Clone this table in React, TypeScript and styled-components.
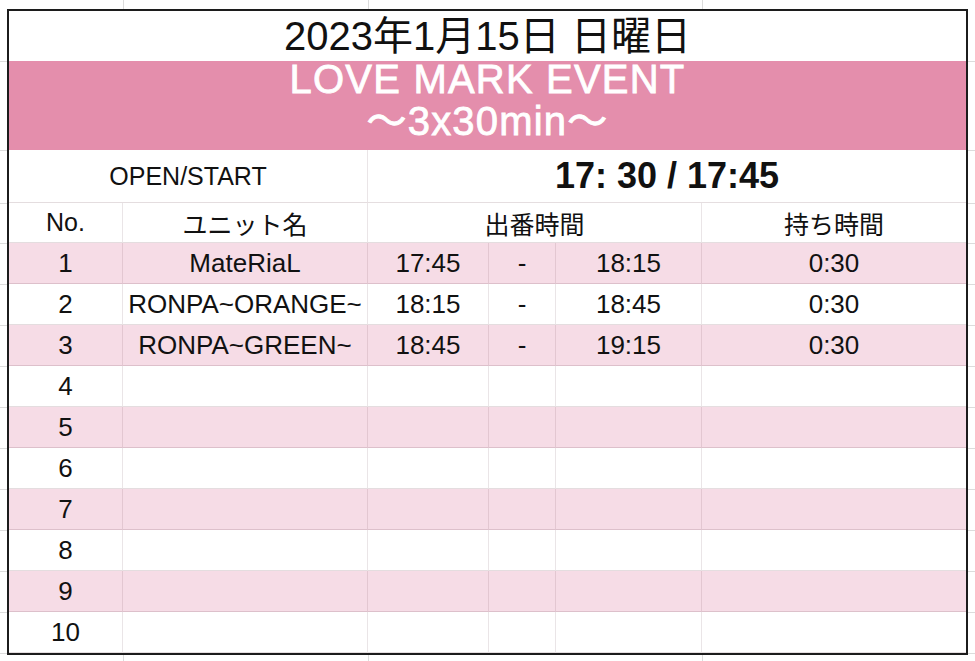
import styled, { createGlobalStyle } from "styled-components";

const GlobalStyle = createGlobalStyle`
  html, body {
    margin: 0;
    padding: 0;
    background-color: #fff;
  }
  body {
    font-family: "Liberation Sans", "Noto Sans CJK JP", sans-serif;
    color: #111;
    /* faint spreadsheet grid showing around the printed table */
    background-image:
      linear-gradient(#dcdcdc, #dcdcdc),
      linear-gradient(#dcdcdc, #dcdcdc),
      linear-gradient(#dcdcdc, #dcdcdc),
      linear-gradient(#dcdcdc, #dcdcdc),
      linear-gradient(#dcdcdc, #dcdcdc),
      linear-gradient(#dcdcdc, #dcdcdc),
      repeating-linear-gradient(
        to bottom,
        #dcdcdc 0 1px,
        transparent 1px 41px
      );
    background-repeat: no-repeat;
    background-size: 1px 100%, 1px 100%, 1px 100%, 100% 1px, 100% 1px,
      100% 1px, 100% 460px;
    background-position: 123px 0, 368px 0, 702px 0, 0 61px, 0 150px,
      0 203px, 0 243px;
    min-height: 661px;
  }
`;

const Page = styled.div`
  padding: 9px 7px 0 7px;
`;

const Sheet = styled.div`
  width: 957px;
  border: 2px solid #1c1c1c;
  background: #fff;
  display: grid;
  grid-template-columns: 114px 245px 121px 67px 146px 1fr;
  grid-template-rows: 50px 89px 53px 40px repeat(10, 41px);
`;

const Title = styled.div`
  grid-column: 1 / -1;
  display: flex;
  align-items: center;
  justify-content: center;
  font-size: 40px;
  color: #111;
  padding-bottom: 6px;
`;

const Banner = styled.div`
  grid-column: 1 / -1;
  background: #e48eac;
  color: #fff;
  display: flex;
  flex-direction: column;
  align-items: center;
  justify-content: center;
  font-size: 40px;
  letter-spacing: 1.2px;
  line-height: 42px;
  padding-bottom: 12px;
  -webkit-text-stroke: 0.8px #fff;
`;

const Cell = styled.div<{ $span?: string; $pink?: boolean; $last?: boolean }>`
  grid-column: ${(p) => p.$span ?? "auto"};
  display: flex;
  align-items: center;
  justify-content: center;
  font-size: 26px;
  white-space: nowrap;
  background: ${(p) => (p.$pink ? "#f6dce6" : "#fff")};
  border-bottom: 1px solid rgba(110, 70, 85, 0.18);
  border-right: ${(p) => (p.$last ? "none" : "1px solid rgba(110, 70, 85, 0.14)")};
  box-sizing: border-box;
`;

const Label = styled(Cell)`
  font-size: 25px;
`;

const StartTime = styled(Cell)`
  font-size: 36px;
  font-weight: 700;
`;

type Slot = { name: string; from: string; to: string; length: string };

const slots: Slot[] = [
  { name: "MateRiaL", from: "17:45", to: "18:15", length: "0:30" },
  { name: "RONPA~ORANGE~", from: "18:15", to: "18:45", length: "0:30" },
  { name: "RONPA~GREEN~", from: "18:45", to: "19:15", length: "0:30" },
];

const App = () => {
  const rows = Array.from({ length: 10 }, (_, i) => slots[i]);
  return (
    <>
      <GlobalStyle />
      <Page>
        <Sheet>
          <Title>2023年1月15日 日曜日</Title>
          <Banner>
            <span>LOVE MARK EVENT</span>
            <span>〜3x30min〜</span>
          </Banner>
          <Label $span="1 / 3">OPEN/START</Label>
          <StartTime $span="3 / 7" $last>
            17: 30 / 17:45
          </StartTime>
          <Label>No.</Label>
          <Label>ユニット名</Label>
          <Label $span="3 / 6">出番時間</Label>
          <Label $last>持ち時間</Label>
          {rows.map((slot, i) => {
            const pink = i % 2 === 0;
            return [
              <Cell key={`n${i}`} $pink={pink}>
                {i + 1}
              </Cell>,
              <Cell key={`u${i}`} $pink={pink}>
                {slot?.name}
              </Cell>,
              <Cell key={`f${i}`} $pink={pink}>
                {slot?.from}
              </Cell>,
              <Cell key={`d${i}`} $pink={pink}>
                {slot ? "-" : ""}
              </Cell>,
              <Cell key={`t${i}`} $pink={pink}>
                {slot?.to}
              </Cell>,
              <Cell key={`l${i}`} $pink={pink} $last>
                {slot?.length}
              </Cell>,
            ];
          })}
        </Sheet>
      </Page>
    </>
  );
};

export default App;
